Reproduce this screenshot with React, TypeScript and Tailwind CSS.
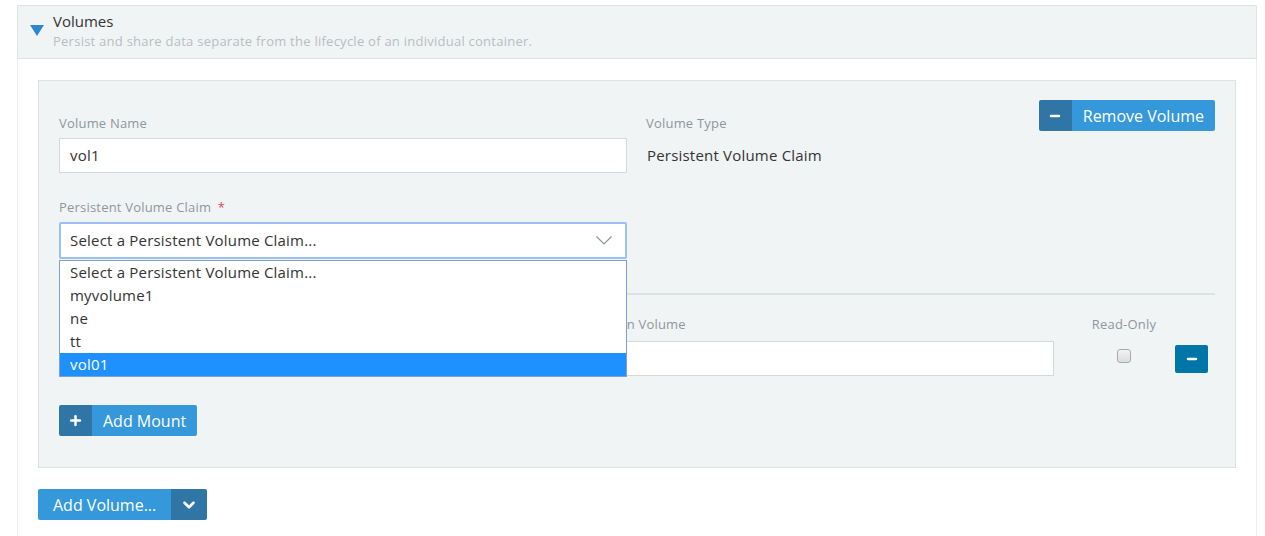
import { Minus, Plus, ChevronDown } from "lucide-react";

const font = { fontFamily: '"Open Sans", "Liberation Sans", sans-serif' };

const claims = ["Select a Persistent Volume Claim...", "myvolume1", "ne", "tt", "vol01"];

const label = "text-[13px] leading-[18px] tracking-[0.2px] text-[#8e979c]";

const SplitButton = ({ label, icon, className }: { label: string; icon: any; className?: string }) => (
  <button className={"flex h-[31px] items-stretch rounded-[2px] overflow-hidden text-white " + (className || "")}>
    <span className="flex w-[33px] items-center justify-center bg-[#2f75a6]">{icon}</span>
    <span className="flex items-center bg-[#3498db] px-[11px] text-[16px]">{label}</span>
  </button>
);

export default function App() {
  return (
    <div className="h-[536px] w-[1265px] overflow-hidden bg-white text-[#333]" style={font}>
      <div className="ml-[17px] mr-[8px] pt-[5px]">
        {/* section header */}
        <div className="flex h-[54px] border border-[#dfe4e6] bg-[#f1f4f5]">
          <div className="pl-[12px] pt-[19px]">
            <svg width="14" height="11" viewBox="0 0 14 11">
              <polygon points="0,0 14,0 7,11" fill="#2d87cf" />
            </svg>
          </div>
          <div className="pl-[9px] pt-[4px]">
            <div className="text-[15px] leading-[22px] text-[#333]">Volumes</div>
            <div className="text-[13px] leading-[19px] tracking-[0.25px] text-[#b7bec2]">
              Persist and share data separate from the lifecycle of an individual container.
            </div>
          </div>
        </div>

        <div className="border-x border-[#eceff0] px-[20px] pt-[21px] pb-[20px]">
          {/* volume panel */}
          <div className="relative border border-[#dde2e5] bg-[#f1f4f5] px-[20px] pt-[19px] pb-[31px]">
            <div className="flex">
              <div className="w-[568px] pt-[14px]">
                <div className={label}>Volume Name</div>
                <div className="mt-[6px] flex h-[35px] items-center border border-[#d3d9dc] bg-white px-[10px] text-[15px] tracking-[0.2px]">
                  vol1
                </div>
              </div>
              <div className="ml-[19px] flex-1 pt-[14px]">
                <div className={label}>Volume Type</div>
                <div className="mt-[13px] pl-[1px] text-[15px] leading-[20px] tracking-[0.2px]">Persistent Volume Claim</div>
              </div>
              <SplitButton
                label="Remove Volume"
                icon={<Minus size={14} strokeWidth={4} />}
                className="self-start"
              />
            </div>

            <div className="relative mt-[25px] w-[568px]">
              <div className={label}>
                Persistent Volume Claim <span className="ml-[3px] text-[#e04b4b]">*</span>
              </div>
              <div className="mt-[6px] flex h-[37px] items-center justify-between rounded-[2px] border-2 border-[#9cc0f2] bg-white pl-[9px] pr-[12px] text-[15px] tracking-[0.2px]">
                <span>Select a Persistent Volume Claim...</span>
                <svg width="16" height="9" viewBox="0 0 16 9" className="mr-[1px]">
                  <polyline points="0.5,0.5 8,8 15.5,0.5" fill="none" stroke="#8d959a" strokeWidth="1.2" />
                </svg>
              </div>
              <div className="absolute left-0 right-0 top-[62px] z-10 border border-[#7f9fd6] bg-white text-[15px] tracking-[0.2px]">
                {claims.map((c) => (
                  <div
                    key={c}
                    className={
                      "flex h-[23px] items-center pl-[10px] " +
                      (c === "vol01" ? "bg-[#1e90ff] text-white" : "text-[#333]")
                    }
                  >
                    {c}
                  </div>
                ))}
              </div>
            </div>

            <div className="mt-[34px] h-[2px] bg-[#dde2e5]" />

            {/* mount row */}
            <div className="mt-[20px] flex items-start">
              <div className="w-[484px]">
                <div className={label}>Mount Point</div>
                <div className="mt-[8px] h-[35px] border border-[#d3d9dc] bg-white" />
              </div>
              <div className="ml-[21px] w-[490px]">
                <div className={label}>Sub Path in Volume</div>
                <div className="mt-[8px] h-[35px] border border-[#d3d9dc] bg-white" />
              </div>
              <div className="ml-[37px] flex w-[66px] flex-col items-center">
                <div className={label + " whitespace-nowrap"}>Read-Only</div>
                <div className="mt-[16px] h-[14px] w-[14px] rounded-[3px] border border-[#a9a9a9] bg-gradient-to-b from-[#f3f3f3] to-[#dcdcdc]" />
              </div>
              <button className="ml-[18px] mt-[30px] flex h-[28px] w-[33px] items-center justify-center rounded-[2px] bg-[#0075a8] text-white">
                <Minus size={14} strokeWidth={4} />
              </button>
            </div>

            <SplitButton label="Add Mount" icon={<Plus size={15} strokeWidth={4} />} className="mt-[29px]" />
          </div>

          <button className="mt-[21px] flex h-[31px] items-stretch overflow-hidden rounded-[2px] text-white">
            <span className="flex items-center bg-[#3498db] px-[15px] text-[16px]">Add Volume...</span>
            <span className="flex w-[36px] items-center justify-center bg-[#2f75a6]">
              <ChevronDown size={18} strokeWidth={3.5} />
            </span>
          </button>
        </div>
      </div>
    </div>
  );
}
